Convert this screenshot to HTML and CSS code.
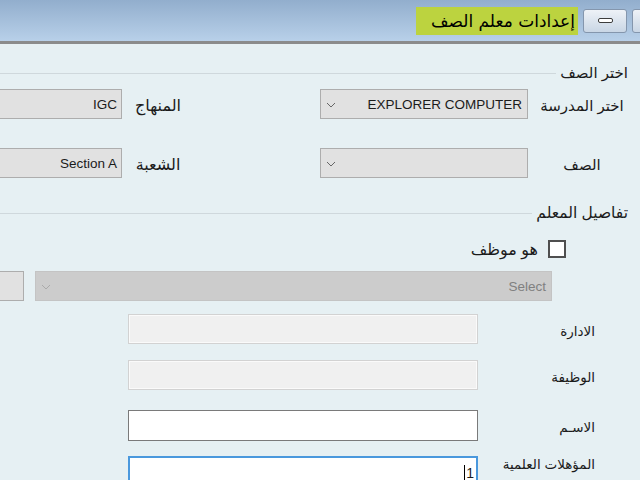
FILE: index.html
```html
<!DOCTYPE html>
<html lang="ar" dir="rtl">
   <head>
      <meta charset="UTF-8">
      <title>إعدادات معلم الصف</title>
      <link rel="stylesheet" href="styles.css">
   </head>
   <body>
      <div class="titlebar">
         <div class="tb-btn tb-cut"></div>
         <div class="tb-btn"><span class="tb-min"></span></div>
         <div class="tab">إعدادات معلم الصف</div>
      </div>

      <div class="content">
         <div class="group-head"><span>اختر الصف</span><span class="rule"></span></div>

         <div class="row row-first">
            <div class="lbl lbl-r">اختر المدرسة</div>
            <div class="combo">
               <span class="combo-text">EXPLORER COMPUTER</span>
               <svg class="chev" width="10" height="6" viewBox="0 0 10 6"><path d="M1 1 L5 5 L9 1" fill="none" stroke="#666" stroke-width="1"/></svg>
            </div>
            <div class="lbl lbl-l">المنهاج</div>
            <div class="box">IGC</div>
         </div>

         <div class="row">
            <div class="lbl lbl-r">الصف</div>
            <div class="combo">
               <span class="combo-text"></span>
               <svg class="chev" width="10" height="6" viewBox="0 0 10 6"><path d="M1 1 L5 5 L9 1" fill="none" stroke="#666" stroke-width="1"/></svg>
            </div>
            <div class="lbl lbl-l">الشعبة</div>
            <div class="box">Section A</div>
         </div>

         <div class="group-head group-two"><span>تفاصيل المعلم</span><span class="rule"></span></div>

         <div class="check-row">
            <span class="check"></span>
            <span class="check-label">هو موظف</span>
         </div>

         <div class="select-row">
            <div class="combo combo-off">
               <span class="combo-text">Select</span>
               <svg class="chev" width="10" height="6" viewBox="0 0 10 6"><path d="M1 1 L5 5 L9 1" fill="none" stroke="#aaa" stroke-width="1"/></svg>
            </div>
            <div class="mini"></div>
         </div>

         <div class="field">
            <div class="flbl">الادارة</div>
            <div class="inp inp-off"></div>
         </div>
         <div class="field">
            <div class="flbl">الوظيفة</div>
            <div class="inp inp-off"></div>
         </div>
         <div class="field field-wide">
            <div class="flbl">الاسـم</div>
            <div class="inp"></div>
         </div>
         <div class="field field-last">
            <div class="flbl">المؤهلات العلمية</div>
            <div class="inp inp-focus"><span>1</span><span class="caret"></span></div>
         </div>
      </div>
   </body>
</html>
```

FILE: styles.css
```css
html, body {
margin: 0;
padding: 0;
}
body {
width: 640px;
height: 480px;
overflow: hidden;
background-color: #e6f0f3;
font-family: "Liberation Sans", "DejaVu Sans", sans-serif;
font-size: 13px;
color: #1b1b1b;
}

/* title bar */
.titlebar {
height: 41px;
display: flex;
align-items: center;
gap: 5px;
background: linear-gradient(#92aecd, #b8d0e9);
border-bottom: 3px solid #8b8b8b;
overflow: hidden;
}
.tab {
width: 159px;
height: 28px;
line-height: 28px;
padding-right: 3px;
background-color: #bcd33f;
font-family: "DejaVu Sans", sans-serif;
font-size: 17px;
color: #000;
white-space: nowrap;
overflow: hidden;
}
.tb-btn {
flex: none;
width: 42px;
height: 22px;
border: 1px solid #8496ad;
border-radius: 3px;
background: linear-gradient(#eef2f7, #c9d6e5);
display: flex;
align-items: center;
justify-content: center;
}
.tb-cut {
margin-right: -36px;
}
.tb-min {
width: 13px;
height: 3px;
background: #fff;
border: 1px solid #3d3d3d;
border-radius: 2px;
}

/* group headers */
.group-head {
display: flex;
align-items: center;
height: 16px;
margin-top: 21px;
padding-right: 12px;
white-space: nowrap;
font-size: 15px;
}
.group-head .rule {
flex: 1;
border-top: 1px solid #cfd8dc;
margin-right: 4px;
}
.group-two {
margin-top: 27px;
font-size: 15.5px;
}

/* top rows */
.row {
display: flex;
align-items: center;
height: 30px;
margin-top: 29px;
margin-right: 10px;
white-space: nowrap;
}
.row-first {
margin-top: 8px;
}
.lbl {
flex: none;
text-align: center;
padding-top: 3px;
font-size: 15px;
}
.lbl-r {
width: 96px;
margin-left: 6px;
}
.lbl-l {
width: 64px;
margin-right: 130px;
margin-left: 4px;
font-size: 16px;
}
.combo {
flex: none;
box-sizing: border-box;
width: 208px;
height: 30px;
background-color: #e1e1e1;
border: 1px solid #adadad;
display: flex;
align-items: center;
justify-content: space-between;
padding: 1px 5px 0 5px;
font-size: 13.5px;
}
.chev {
display: block;
}
.box {
flex: none;
box-sizing: border-box;
width: 160px;
height: 30px;
line-height: 29px;
background-color: #e1e1e1;
border: 1px solid #adadad;
padding-right: 4px;
font-size: 13.5px;
}

/* teacher details */
.check-row {
display: flex;
align-items: center;
height: 18px;
margin-top: 19px;
margin-right: 74px;
}
.check {
box-sizing: border-box;
width: 18px;
height: 18px;
border: 2px solid #4f4f4f;
background: #fff;
}
.check-label {
margin-right: 10px;
font-size: 16px;
}
.select-row {
display: flex;
height: 30px;
margin-top: 13px;
margin-right: 88px;
}
.combo-off {
width: 517px;
background-color: #cccccc;
border-color: #c4c4c4;
color: #808080;
}
.mini {
flex: none;
box-sizing: border-box;
width: 40px;
height: 30px;
margin-right: 11px;
background-color: #e1e1e1;
border: 1px solid #adadad;
}

.field {
display: flex;
align-items: center;
height: 30px;
margin-top: 13px;
margin-right: 45px;
}
.field + .field {
margin-top: 16px;
}
.field-wide.field {
margin-top: 20px;
}
.field-last.field {
align-items: flex-start;
height: auto;
}
.flbl {
flex: none;
width: 117px;
padding-top: 4px;
white-space: nowrap;
font-size: 13.5px;
}
.field-last .flbl {
padding-top: 0;
}
.inp {
flex: none;
box-sizing: border-box;
width: 350px;
height: 31px;
background: #fff;
border: 1px solid #7a7a7a;
display: flex;
align-items: center;
padding-right: 2px;
font-size: 14px;
}
.inp-off {
height: 30px;
background: #f0f0f0;
border-color: #d2d2d2;
box-shadow: inset 0 0 0 1px #fafafa;
}
.inp-focus {
height: 34px;
border: 2px solid #4a98dd;
}
.caret {
width: 1px;
height: 17px;
background: #000;
margin-right: 1px;
}
```
